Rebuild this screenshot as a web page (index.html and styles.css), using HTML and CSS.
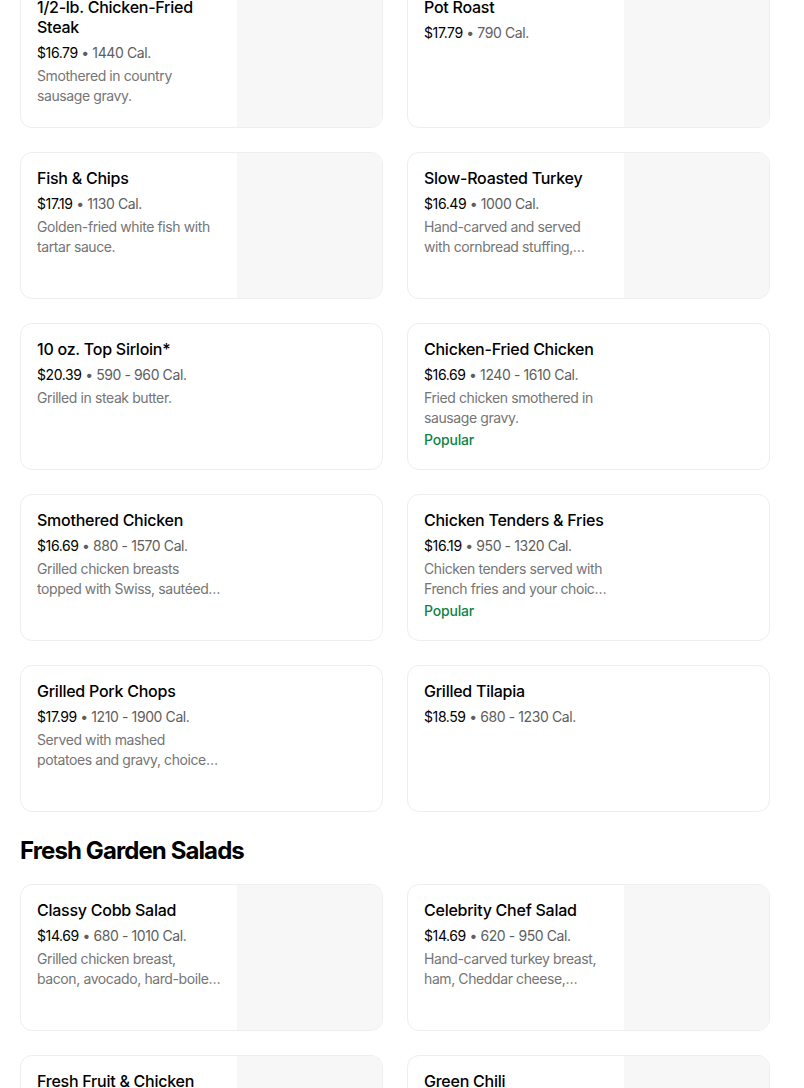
FILE: index.html
```html
<!DOCTYPE html>
<html lang="en">
<head>
<meta charset="utf-8">
<link rel="stylesheet" href="styles.css">
</head>
<body>
<main class="menu">
  <section class="grid grid-first">
    <div class="card">
      <div class="info">
        <h3 class="title">1/2-lb. Chicken-Fried Steak</h3>
        <div class="meta"><span class="price">$16.79</span> • 1440 Cal.</div>
        <p class="desc">Smothered in country sausage gravy.</p>
      </div>
      <div class="thumb"></div>
    </div>
    <div class="card">
      <div class="info">
        <h3 class="title">Pot Roast</h3>
        <div class="meta"><span class="price">$17.79</span> • 790 Cal.</div>
      </div>
      <div class="thumb"></div>
    </div>
    <div class="card">
      <div class="info">
        <h3 class="title">Fish &amp; Chips</h3>
        <div class="meta"><span class="price">$17.19</span> • 1130 Cal.</div>
        <p class="desc">Golden-fried white fish with tartar sauce.</p>
      </div>
      <div class="thumb"></div>
    </div>
    <div class="card">
      <div class="info">
        <h3 class="title">Slow-Roasted Turkey</h3>
        <div class="meta"><span class="price">$16.49</span> • 1000 Cal.</div>
        <p class="desc">Hand-carved and served with cornbread stuffing, mashed potatoes and gravy.</p>
      </div>
      <div class="thumb"></div>
    </div>
    <div class="card">
      <div class="info">
        <h3 class="title">10 oz. Top Sirloin*</h3>
        <div class="meta"><span class="price">$20.39</span> • 590 - 960 Cal.</div>
        <p class="desc">Grilled in steak butter.</p>
      </div>
    </div>
    <div class="card">
      <div class="info">
        <h3 class="title">Chicken-Fried Chicken</h3>
        <div class="meta"><span class="price">$16.69</span> • 1240 - 1610 Cal.</div>
        <p class="desc">Fried chicken smothered in sausage gravy.</p>
        <div class="popular">Popular</div>
      </div>
    </div>
    <div class="card">
      <div class="info">
        <h3 class="title">Smothered Chicken</h3>
        <div class="meta"><span class="price">$16.69</span> • 880 - 1570 Cal.</div>
        <p class="desc">Grilled chicken breasts topped with Swiss, sautéed mushrooms and onions.</p>
      </div>
    </div>
    <div class="card">
      <div class="info">
        <h3 class="title">Chicken Tenders &amp; Fries</h3>
        <div class="meta"><span class="price">$16.19</span> • 950 - 1320 Cal.</div>
        <p class="desc">Chicken tenders served with French fries and your choice of dipping sauce.</p>
        <div class="popular">Popular</div>
      </div>
    </div>
    <div class="card">
      <div class="info">
        <h3 class="title">Grilled Pork Chops</h3>
        <div class="meta"><span class="price">$17.99</span> • 1210 - 1900 Cal.</div>
        <p class="desc">Served with mashed potatoes and gravy, choice of side.</p>
      </div>
    </div>
    <div class="card">
      <div class="info">
        <h3 class="title">Grilled Tilapia</h3>
        <div class="meta"><span class="price">$18.59</span> • 680 - 1230 Cal.</div>
      </div>
    </div>
  </section>

  <h2 class="section-title">Fresh Garden Salads</h2>

  <section class="grid">
    <div class="card">
      <div class="info">
        <h3 class="title">Classy Cobb Salad</h3>
        <div class="meta"><span class="price">$14.69</span> • 680 - 1010 Cal.</div>
        <p class="desc">Grilled chicken breast, bacon, avocado, hard-boiled egg and bleu cheese.</p>
      </div>
      <div class="thumb"></div>
    </div>
    <div class="card">
      <div class="info">
        <h3 class="title">Celebrity Chef Salad</h3>
        <div class="meta"><span class="price">$14.69</span> • 620 - 950 Cal.</div>
        <p class="desc">Hand-carved turkey breast, ham, Cheddar cheese, bacon and egg.</p>
      </div>
      <div class="thumb"></div>
    </div>
    <div class="card">
      <div class="info">
        <h3 class="title">Fresh Fruit &amp; Chicken</h3>
        <div class="meta"><span class="price">$14.29</span> • 590 Cal.</div>
      </div>
      <div class="thumb"></div>
    </div>
    <div class="card">
      <div class="info">
        <h3 class="title">Green Chili</h3>
        <div class="meta"><span class="price">$8.99</span> • 420 Cal.</div>
      </div>
      <div class="thumb"></div>
    </div>
  </section>
</main>
</body>
</html>
```

FILE: styles.css
```css
* { box-sizing: border-box; }

html, body {
  margin: 0;
  padding: 0;
  background: #ffffff;
}

body {
  font-family: Inter, "Noto Sans", "Liberation Sans", sans-serif;
  color: #000000;
  overflow: hidden;
}

.menu {
  width: 750px;
  margin-left: 20px;
}

.grid {
  display: grid;
  grid-template-columns: 363px 363px;
  column-gap: 24px;
  row-gap: 24px;
}

.grid-first {
  margin-top: -19px;
}

.card {
  height: 147px;
  border: 1px solid #eeeeee;
  border-radius: 12px;
  overflow: hidden;
  display: flex;
  background: #ffffff;
}

.info {
  width: 216px;
  padding: 15px 16px 0 16px;
  flex: none;
}

.thumb {
  flex: 1;
  background: #f7f7f7;
}

.title {
  margin: 0;
  font-size: 16px;
  line-height: 20px;
  font-weight: 500;
  letter-spacing: -0.25px;
  color: #000000;
}

.meta {
  margin-top: 6px;
  font-size: 14px;
  line-height: 20px;
  letter-spacing: -0.4px;
  color: #5e5e5e;
}

.price {
  color: #000000;
}

.desc {
  margin: 3px 0 0 0;
  font-size: 14px;
  line-height: 20px;
  letter-spacing: -0.4px;
  color: #757575;
  display: -webkit-box;
  -webkit-line-clamp: 2;
  -webkit-box-orient: vertical;
  overflow: hidden;
}

.popular {
  margin-top: 2px;
  font-size: 14px;
  line-height: 20px;
  font-weight: 500;
  letter-spacing: -0.2px;
  color: #0e8345;
}

.section-title {
  margin: 23px 0 17px 0;
  font-size: 24px;
  line-height: 32px;
  font-weight: 700;
  letter-spacing: -0.9px;
}
```
